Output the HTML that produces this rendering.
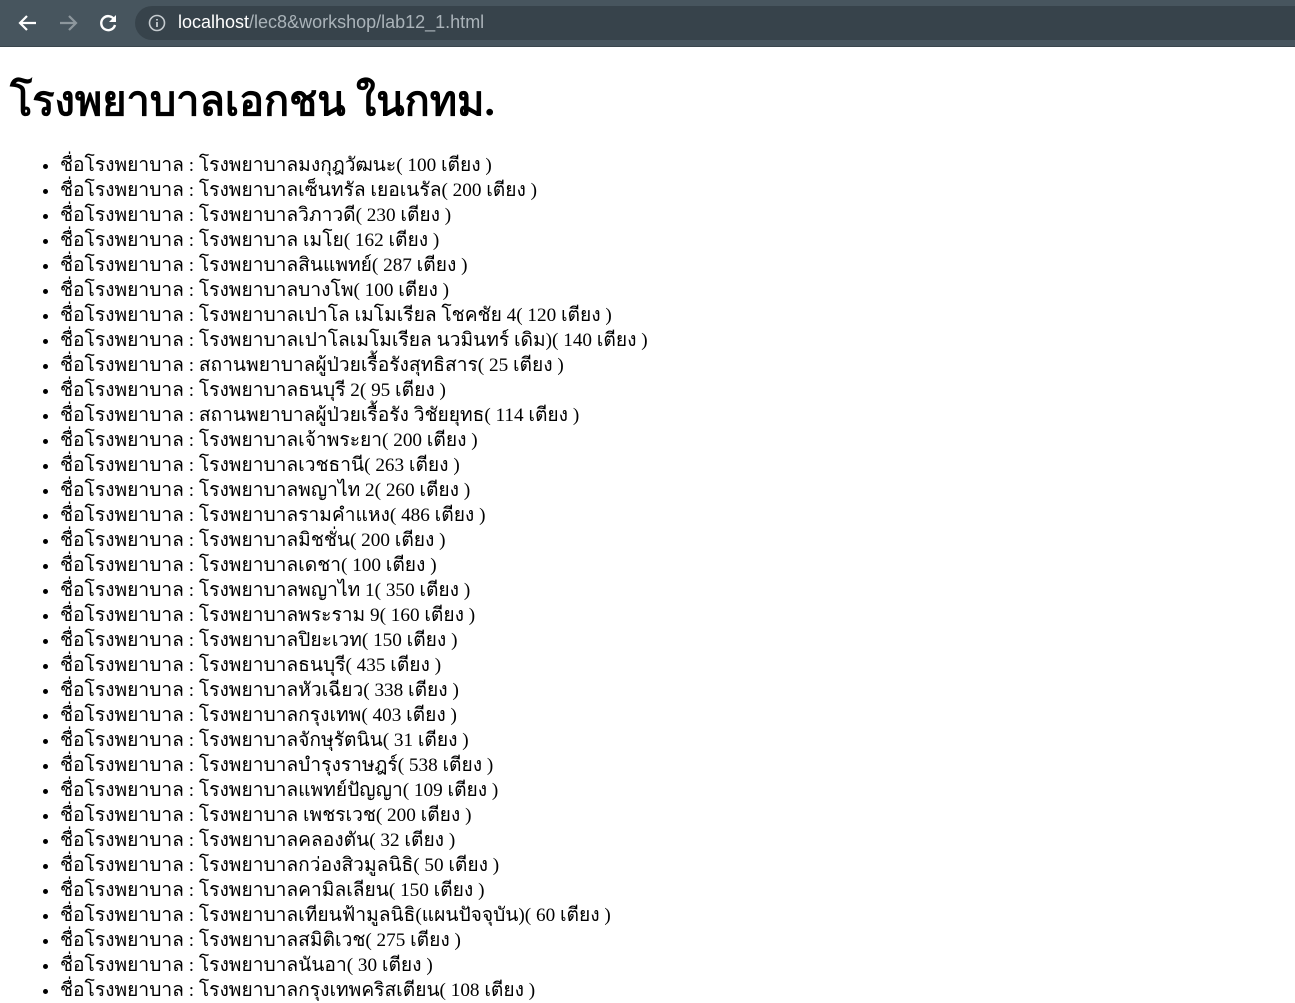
<!DOCTYPE html>
<html><head><meta charset="utf-8"><style>
body{margin:0;background:#fff;overflow:hidden;width:1295px;height:988px;}
.bar{height:46px;background:#47555e;position:relative;border-bottom:1px solid #3a464d}
.pill{position:absolute;left:135px;top:6px;width:1180px;height:34px;background:#37434b;border-radius:17px}
.url{position:absolute;left:178px;top:12px;font:18px "Liberation Sans",sans-serif;color:#aab3b9}
.url b{font-weight:normal;color:#fff}
.ic{position:absolute;top:11px}
h1{font:bold 41.5px "Liberation Serif",serif;margin:0;position:absolute;left:10px;top:68px}
ul{position:absolute;left:0;top:153px;margin:0;padding-left:60px;font:19.2px "Liberation Serif",serif;line-height:25px}
</style></head><body>
<div class="bar">
<svg class="ic" style="left:16px" width="24" height="24" viewBox="0 0 24 24"><path d="M20 12H5M11 5l-7 7 7 7" stroke="#fff" stroke-width="2.2" fill="none"/></svg>
<svg class="ic" style="left:56px" width="24" height="24" viewBox="0 0 24 24"><path d="M4 12h15M13 5l7 7-7 7" stroke="#8d979d" stroke-width="2.2" fill="none"/></svg>
<svg class="ic" style="left:96px" width="24" height="24" viewBox="0 0 24 24"><path d="M18.5 9A7 7 0 1 0 19 14" stroke="#fff" stroke-width="2.4" fill="none"/><path d="M20 4v7h-7z" fill="#fff"/></svg>
<div class="pill"></div>
<svg class="ic" style="left:148px;top:14px" width="18" height="18" viewBox="0 0 18 18"><circle cx="9" cy="9" r="7.5" stroke="#c5cbcf" stroke-width="1.6" fill="none"/><path d="M9 8v5M9 5v1.5" stroke="#c5cbcf" stroke-width="1.8"/></svg>
<div class="url"><b>localhost</b>/lec8&amp;workshop/lab12_1.html</div>
</div>
<h1>โรงพยาบาลเอกชน ในกทม.</h1>
<ul>
<li>ชื่อโรงพยาบาล : โรงพยาบาลมงกุฎวัฒนะ( 100 เตียง )</li>
<li>ชื่อโรงพยาบาล : โรงพยาบาลเซ็นทรัล เยอเนรัล( 200 เตียง )</li>
<li>ชื่อโรงพยาบาล : โรงพยาบาลวิภาวดี( 230 เตียง )</li>
<li>ชื่อโรงพยาบาล : โรงพยาบาล เมโย( 162 เตียง )</li>
<li>ชื่อโรงพยาบาล : โรงพยาบาลสินแพทย์( 287 เตียง )</li>
<li>ชื่อโรงพยาบาล : โรงพยาบาลบางโพ( 100 เตียง )</li>
<li>ชื่อโรงพยาบาล : โรงพยาบาลเปาโล เมโมเรียล โชคชัย 4( 120 เตียง )</li>
<li>ชื่อโรงพยาบาล : โรงพยาบาลเปาโลเมโมเรียล นวมินทร์ เดิม)( 140 เตียง )</li>
<li>ชื่อโรงพยาบาล : สถานพยาบาลผู้ป่วยเรื้อรังสุทธิสาร( 25 เตียง )</li>
<li>ชื่อโรงพยาบาล : โรงพยาบาลธนบุรี 2( 95 เตียง )</li>
<li>ชื่อโรงพยาบาล : สถานพยาบาลผู้ป่วยเรื้อรัง วิชัยยุทธ( 114 เตียง )</li>
<li>ชื่อโรงพยาบาล : โรงพยาบาลเจ้าพระยา( 200 เตียง )</li>
<li>ชื่อโรงพยาบาล : โรงพยาบาลเวชธานี( 263 เตียง )</li>
<li>ชื่อโรงพยาบาล : โรงพยาบาลพญาไท 2( 260 เตียง )</li>
<li>ชื่อโรงพยาบาล : โรงพยาบาลรามคำแหง( 486 เตียง )</li>
<li>ชื่อโรงพยาบาล : โรงพยาบาลมิชชั่น( 200 เตียง )</li>
<li>ชื่อโรงพยาบาล : โรงพยาบาลเดชา( 100 เตียง )</li>
<li>ชื่อโรงพยาบาล : โรงพยาบาลพญาไท 1( 350 เตียง )</li>
<li>ชื่อโรงพยาบาล : โรงพยาบาลพระราม 9( 160 เตียง )</li>
<li>ชื่อโรงพยาบาล : โรงพยาบาลปิยะเวท( 150 เตียง )</li>
<li>ชื่อโรงพยาบาล : โรงพยาบาลธนบุรี( 435 เตียง )</li>
<li>ชื่อโรงพยาบาล : โรงพยาบาลหัวเฉียว( 338 เตียง )</li>
<li>ชื่อโรงพยาบาล : โรงพยาบาลกรุงเทพ( 403 เตียง )</li>
<li>ชื่อโรงพยาบาล : โรงพยาบาลจักษุรัตนิน( 31 เตียง )</li>
<li>ชื่อโรงพยาบาล : โรงพยาบาลบำรุงราษฎร์( 538 เตียง )</li>
<li>ชื่อโรงพยาบาล : โรงพยาบาลแพทย์ปัญญา( 109 เตียง )</li>
<li>ชื่อโรงพยาบาล : โรงพยาบาล เพชรเวช( 200 เตียง )</li>
<li>ชื่อโรงพยาบาล : โรงพยาบาลคลองตัน( 32 เตียง )</li>
<li>ชื่อโรงพยาบาล : โรงพยาบาลกว่องสิวมูลนิธิ( 50 เตียง )</li>
<li>ชื่อโรงพยาบาล : โรงพยาบาลคามิลเลียน( 150 เตียง )</li>
<li>ชื่อโรงพยาบาล : โรงพยาบาลเทียนฟ้ามูลนิธิ(แผนปัจจุบัน)( 60 เตียง )</li>
<li>ชื่อโรงพยาบาล : โรงพยาบาลสมิติเวช( 275 เตียง )</li>
<li>ชื่อโรงพยาบาล : โรงพยาบาลนันอา( 30 เตียง )</li>
<li>ชื่อโรงพยาบาล : โรงพยาบาลกรุงเทพคริสเตียน( 108 เตียง )</li>
</ul>
</body></html>
